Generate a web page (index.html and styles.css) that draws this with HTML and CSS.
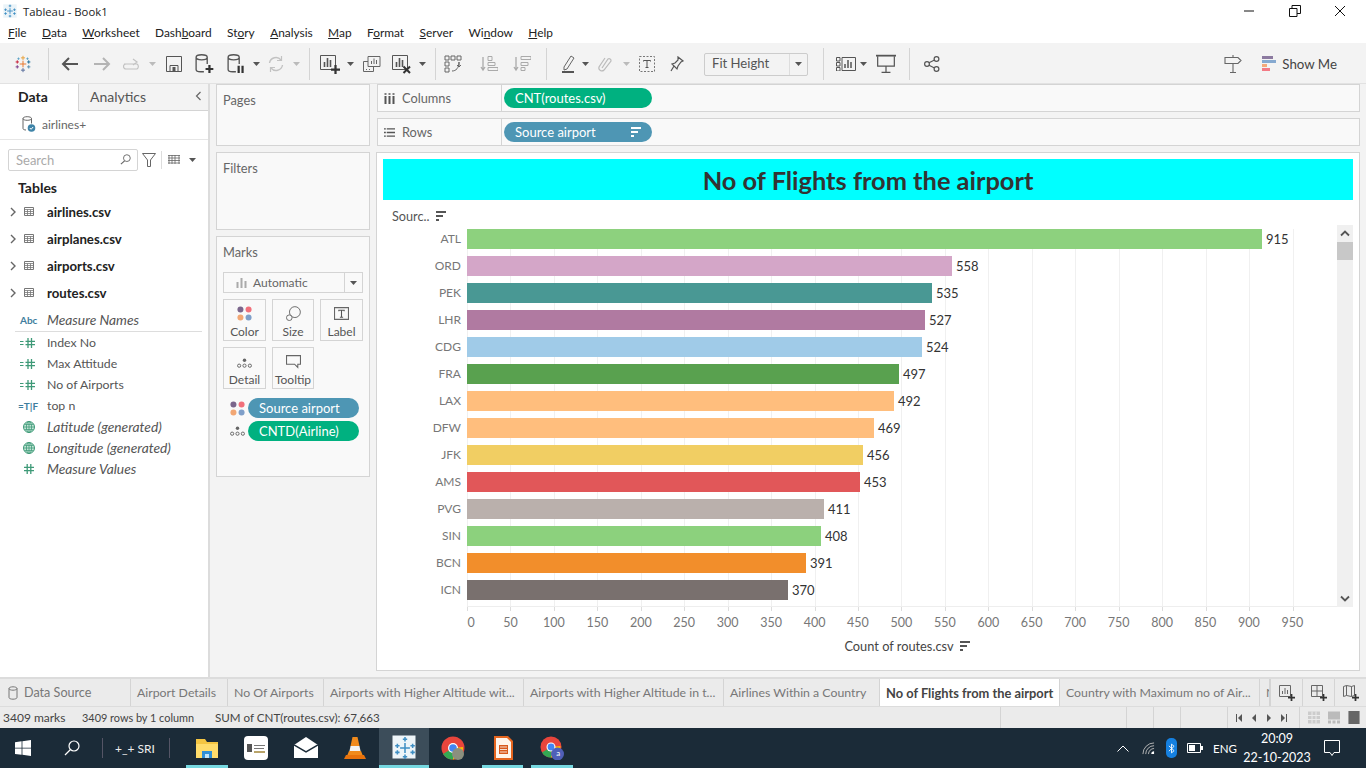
FILE: index.html
```html
<!DOCTYPE html>
<html lang="en">
<head>
<meta charset="utf-8">
<title>Tableau - Book1</title>
<link rel="stylesheet" href="styles.css">
</head>
<body>
<svg class="sprite" xmlns="http://www.w3.org/2000/svg">
  <symbol id="sort" viewBox="0 0 12 10"><path d="M1 1h10M1 5h7M1 9h3" stroke-width="2" stroke="currentColor" fill="none"/></symbol>
  <symbol id="caret" viewBox="0 0 7 4"><path d="M0 0h7L3.500 4z" fill="currentColor"/></symbol>
  <symbol id="chev" viewBox="0 0 6 10"><path d="M1 1l4 4-4 4" fill="none" stroke="#666" stroke-width="1.400"/></symbol>
  <symbol id="table" viewBox="0 0 10 9"><path d="M.5 .5h9v8h-9z" fill="none" stroke="#777"/><path d="M.5 2.500h9M.5 4.500h9M.5 6.500h9M3.500 2.500v6M6.500 2.500v6" stroke="#777" stroke-width=".8"/></symbol>
  <symbol id="measure" viewBox="0 0 15 10"><path d="M0 3.500h3.500M0 6.500h3.500" stroke="#3f9a78" stroke-width="1.200"/><path d="M8 0v10M11.500 0v10M5.500 3.300h9.500M5.500 6.700h9.500" stroke="#3f9a78" stroke-width="1.300"/></symbol>
  <symbol id="hash" viewBox="0 0 10 10"><path d="M3.200 0v10M6.800 0v10M0 3.300h10M0 6.700h10" stroke="#3f9a78" stroke-width="1.300"/></symbol>
  <symbol id="globe" viewBox="0 0 12 12"><circle cx="6" cy="6" r="5.500" fill="#c5e6d8" stroke="#3f9a78"/><path d="M.5 6h11M1.400 3.400h9.200M1.400 8.600h9.200M6 .5v11" stroke="#3f9a78" stroke-width=".8"/><ellipse cx="6" cy="6" rx="2.600" ry="5.500" fill="none" stroke="#3f9a78" stroke-width=".8"/></symbol>
  <symbol id="dots4" viewBox="0 0 14 14"><circle cx="3.200" cy="3.200" r="2.800" fill="#7b668c"/><circle cx="10.800" cy="3.200" r="2.800" fill="#f1707b"/><circle cx="3.200" cy="10.800" r="2.800" fill="#f2a774"/><circle cx="10.800" cy="10.800" r="2.800" fill="#7f9fc9"/></symbol>
  <symbol id="detail" viewBox="0 0 14 9"><circle cx="7" cy="2" r="1.600" fill="#666"/><g fill="none" stroke="#666" stroke-width=".9"><circle cx="2" cy="7" r="1.500"/><circle cx="7" cy="7" r="1.500"/><circle cx="12" cy="7" r="1.500"/></g></symbol>
  <symbol id="cyl" viewBox="0 0 14 18"><path d="M1 3v11c0 1.400 2 2 4 2h3M11 3v6M1 3c0-1.400 2.200-2.300 5-2.300S11 1.600 11 3 8.800 5.300 6 5.300 1 4.400 1 3z" fill="none" stroke="#555" stroke-width="1.200"/></symbol>
  <symbol id="tlogo" viewBox="0 0 22 22"><g fill="none" stroke-width="1.200"><path d="M11 7v8M7 11h8" stroke="#e8762d"/><path d="M11 1v5M8.500 3.500h5" stroke="#e8a23d"/><path d="M11 16v5M8.500 18.500h5" stroke="#5b6f9d"/><path d="M4 6.500v4M2 8.500h4" stroke="#c72037"/><path d="M18 6.500v4M16 8.500h4" stroke="#1f6f9a"/><path d="M4 12.500v4M2 14.500h4" stroke="#7b3f8c"/><path d="M18 12.500v4M16 14.500h4" stroke="#5b8fb0"/><path d="M5.500 3v3M4 4.500h3M16.500 3v3M15 4.500h3" stroke="#4e9ac2" stroke-width=".9"/></g></symbol>
  <symbol id="tblue" viewBox="0 0 22 22"><g fill="none" stroke="#3f8fc4" stroke-width="1.400"><path d="M11 6.500v9M6.500 11h9M11 1v4M9 3h4M11 17v4M9 19h4M4 7v4M2 9h4M18 7v4M16 9h4M4 13v4M2 15h4M18 13v4M16 15h4"/></g></symbol>
  <symbol id="plus" viewBox="0 0 8 8"><path d="M4 0v8M0 4h8" stroke="#333" stroke-width="2"/></symbol>
</svg>

<header class="titlebar">
  <svg class="ic14" viewBox="0 0 22 22"><rect x=".5" y=".5" width="21" height="21" fill="#eaf3f8"/><use href="#tblue"/></svg>
  <span class="apptitle">Tableau - Book1</span>
  <div class="winbtns">
    <svg class="ic12" viewBox="0 0 12 12"><path d="M1 6h10" stroke="#111"/></svg>
    <svg class="ic12" viewBox="0 0 12 12"><path d="M.5 3.500h7.500v8H.5zM3 3.500V.5h8.500v8H8" fill="none" stroke="#111"/></svg>
    <svg class="ic12" viewBox="0 0 12 12"><path d="M1 1l10 10M11 1L1 11" stroke="#111"/></svg>
  </div>
</header>

<nav class="menubar">
  <span><u>F</u>ile</span><span><u>D</u>ata</span><span><u>W</u>orksheet</span><span>Dash<u>b</u>oard</span><span>St<u>o</u>ry</span><span><u>A</u>nalysis</span><span><u>M</u>ap</span><span>F<u>o</u>rmat</span><span><u>S</u>erver</span><span>Wi<u>n</u>dow</span><span><u>H</u>elp</span>
</nav>

<div class="toolbar">
  <div class="tb w30"><svg class="ic18" viewBox="0 0 22 22"><use href="#tlogo"/></svg></div>
  <div class="tb w20"><i class="sep"></i></div>
  <div class="tb w24"><svg class="ic18" viewBox="0 0 18 14"><path d="M17 7H2M8 1L2 7l6 6" fill="none" stroke="#555" stroke-width="2"/></svg></div>
  <div class="tb w40"><svg class="ic18" viewBox="0 0 18 14"><path d="M1 7h15M10 1l6 6-6 6" fill="none" stroke="#b4b4b4" stroke-width="2"/></svg></div>
  <div class="tb w20"><svg class="ic18" viewBox="0 0 18 12"><path d="M1 6h13a3 3 0 010 5H3a2 2 0 010-5M10 1l4 3-4 3" fill="none" stroke="#c2c2c2" stroke-width="1.200"/></svg></div>
  <div class="tb w20"><svg class="car lt"><use href="#caret"/></svg></div>
  <div class="tb w24"><svg class="ic16" viewBox="0 0 16 16"><path d="M.5 .5h15v15H.5z" fill="none" stroke="#555"/><path d="M4 15V9.500h8V15" fill="none" stroke="#555"/><path d="M6.500 11h3v4h-3z" fill="#555"/></svg></div>
  <div class="tb w38"><svg class="ic20" viewBox="0 0 18 18"><use href="#cyl" width="14" height="18"/><path d="M13 10v7M9.500 13.500h7" stroke="#333" stroke-width="2"/></svg></div>
  <div class="tb w26"><svg class="ic20" viewBox="0 0 18 18"><use href="#cyl" width="14" height="18"/><path d="M10.500 10.500v6.500M14 10.500v6.500" stroke="#333" stroke-width="2"/></svg></div>
  <div class="tb w12"><svg class="car"><use href="#caret"/></svg></div>
  <div class="tb w28"><svg class="ic18" viewBox="0 0 18 18"><path d="M2.500 8a6.500 6.500 0 0111.500-3M15.500 10a6.500 6.500 0 01-11.500 3" fill="none" stroke="#c2c2c2" stroke-width="1.400"/><path d="M14.500 1v4.500H10M3.500 17v-4.500H8" fill="none" stroke="#c2c2c2" stroke-width="1.200"/></svg></div>
  <div class="tb w12"><svg class="car lt"><use href="#caret"/></svg></div>
  <div class="tb w14"><i class="sep"></i></div>
  <div class="tb w28"><svg class="ic20" viewBox="0 0 20 20"><path d="M.5 1.500h15v14H.5z" fill="none" stroke="#555"/><path d="M4.500 13V8M7.500 13V4M10.500 13V6" stroke="#555" stroke-width="1.600"/><use href="#plus" x="11" y="11" width="9" height="9"/></svg></div>
  <div class="tb w12"><svg class="car"><use href="#caret"/></svg></div>
  <div class="tb w32"><svg class="ic18" viewBox="0 0 18 18"><path d="M5 1.500h12v10H5zM.5 6.500H5M.5 6.500v10h10V12" fill="none" stroke="#666"/><path d="M8.500 9V6M11 9V3.500M13.500 9V5M3 14.500h1M6 14.500h1" stroke="#666"/></svg></div>
  <div class="tb w28"><svg class="ic20" viewBox="0 0 20 20"><path d="M.5 1.500h15v14H.5z" fill="none" stroke="#555"/><path d="M4.500 13V8M7.500 13V4M10.500 13V6" stroke="#555" stroke-width="1.600"/><path d="M11.500 12.500l6.500 6.500M18 12.500L11.500 19" stroke="#333" stroke-width="2"/></svg></div>
  <div class="tb w12"><svg class="car"><use href="#caret"/></svg></div>
  <div class="tb w14"><i class="sep"></i></div>
  <div class="tb w22"><svg class="ic18" viewBox="0 0 18 18"><path d="M1 1h4v4H1zM1 7h4v4H1zM1 13h4v4H1zM7 1h4v4H7zM13 1h4v4h-4z" fill="none" stroke="#666"/><path d="M15 7c0 6-3 9-7 9M15 12l-2-2M15 7v5l2-2" fill="none" stroke="#666"/></svg></div>
  <div class="tb w50"><svg class="ic18" viewBox="0 0 18 18"><path d="M3 2v13M1 12l2 3 2-3" fill="none" stroke="#aaa" stroke-width="1.300"/><path d="M8 1.500h4v4H8zM8 7.500h7v3H8zM8 12.500h10v3H8z" fill="none" stroke="#aaa"/></svg></div>
  <div class="tb w16"><svg class="ic18" viewBox="0 0 18 18"><path d="M3 2v13M1 12l2 3 2-3" fill="none" stroke="#aaa" stroke-width="1.300"/><path d="M8 1.500h10v3H8zM8 7.500h7v3H8zM8 12.500h4v3H8z" fill="none" stroke="#aaa"/></svg></div>
  <div class="tb w32"><i class="sep"></i></div>
  <div class="tb w12"><svg class="ic18" viewBox="0 0 14 18"><path d="M3 12L10 1l3 2-7 11-3 1z" fill="none" stroke="#666"/><path d="M1 17h12" stroke="#555" stroke-width="2"/></svg></div>
  <div class="tb w22"><svg class="car"><use href="#caret"/></svg></div>
  <div class="tb w18"><svg class="ic18" viewBox="0 0 14 18"><path d="M4 13l6-9a2 2 0 013 2L6 15a3 3 0 01-5-3l6-9" fill="none" stroke="#bbb" stroke-width="1.200"/></svg></div>
  <div class="tb w24"><svg class="car lt"><use href="#caret"/></svg></div>
  <div class="tb w18"><svg class="ic16" viewBox="0 0 16 16"><path d="M.5 .5h15v15H.5z" fill="none" stroke="#777" stroke-dasharray="2 1.500"/><path d="M4.500 5.500v-1h7v1M8 4.500v7M6.500 11.500h3" fill="none" stroke="#555"/></svg></div>
  <div class="tb w42"><svg class="ic16" viewBox="0 0 14 16"><path d="M8 1l5 4-2 1-3 4-1 3-5-5 3-1 3-3zM4 10l-3 5" fill="none" stroke="#555" stroke-width="1.200"/></svg></div>
  <div class="fitbox"><span class="fittext">Fit Height</span><span class="fitcar"><svg class="car"><use href="#caret"/></svg></span></div>
  <div class="tb w30"><i class="sep"></i></div>
  <div class="tb w16"><svg class="ic20w" viewBox="0 0 20 14"><path d="M.5 .5h3.500v3.500H.5zM.5 5.500h3.500V9H.5zM.5 10.500h3.500V14H.5zM6 .5h13.500v13H6z" fill="none" stroke="#555"/><path d="M9 11V7M12 11V3M15 11V5" stroke="#555" stroke-width="1.500"/></svg></div>
  <div class="tb w18"><svg class="car"><use href="#caret"/></svg></div>
  <div class="tb w28"><svg class="ic20" viewBox="0 0 18 18"><path d="M0 1.500h18" stroke="#555" stroke-width="1.600"/><path d="M1.500 2v9h15V2M9 11v5M5 16.500h8" fill="none" stroke="#555" stroke-width="1.100"/></svg></div>
  <div class="tb w18"><i class="sep"></i></div>
  <div class="tb w28"><svg class="ic16" viewBox="0 0 16 16"><g fill="none" stroke="#555" stroke-width="1.200"><circle cx="3" cy="8" r="2.400"/><circle cx="12.500" cy="3" r="2.400"/><circle cx="12.500" cy="13" r="2.400"/><path d="M5 6.800l5.500-2.800M5 9.200l5.500 2.800"/></g></svg></div>
  <div class="tbspacer"></div>
  <svg class="ic18 signpost" viewBox="0 0 18 18"><path d="M9 0v3M1 2.500h13l3 3-3 3H1zM9 8.500V17M6 17.500h6" fill="none" stroke="#666" stroke-width="1.100"/></svg>
  <div class="showme">
    <svg class="showme-ic" viewBox="0 0 14 15"><rect width="11" height="3" fill="#8c7aa0"/><rect y="4" width="14" height="3" fill="#86a9d0"/><rect y="8" width="5" height="3" fill="#f4a97a"/><rect y="12" width="8" height="3" fill="#f37a85"/></svg>
    <span>Show Me</span>
  </div>
</div>

<main class="main">
  <aside class="sidebar">
    <div class="sidetabs">
      <div class="stab active">Data</div>
      <div class="stab second">Analytics<svg class="back" viewBox="0 0 7 10"><path d="M5.500 1l-4 4 4 4" fill="none" stroke="#666" stroke-width="1.200"/></svg></div>
    </div>
    <div class="dsrow">
      <svg class="dsicon" viewBox="0 0 14 16"><path d="M1 2.500v10c0 1 1.500 1.500 3 1.500M9.500 2.500v5M1 2.500C1 1.400 2.800 .7 5.200 .7S9.500 1.400 9.500 2.500 7.700 4.300 5.200 4.300 1 3.600 1 2.500z" fill="none" stroke="#666"/><circle cx="9.500" cy="12" r="3.800" fill="#3f84a8"/><path d="M7.800 12l1.300 1.300 2-2.300" fill="none" stroke="#fff"/></svg>
      <span>airlines+</span>
    </div>
    <div class="searchrow">
      <div class="search"><span>Search</span><svg class="ic11" viewBox="0 0 12 12"><circle cx="7.500" cy="4.500" r="3.700" fill="none" stroke="#666"/><path d="M5 7.500L1 11" stroke="#666" stroke-width="1.300"/></svg></div>
      <svg class="filter" viewBox="0 0 14 14"><path d="M.5 .5h13L8.500 7v6.500h-3V7z" fill="none" stroke="#666"/></svg>
      <i class="vsep"></i>
      <svg class="viewgrid" viewBox="0 0 12 9"><path d="M0 .5h12M0 3h12M0 5.500h12M0 8h12M1 0v9M4 0v9M7 0v9M11 0v9" stroke="#666" stroke-width=".8"/></svg>
      <svg class="car"><use href="#caret"/></svg>
    </div>
    <h2 class="tablesh">Tables</h2>
    <ul class="tables">
      <li><svg class="chev"><use href="#chev"/></svg><svg class="tableic"><use href="#table"/></svg><b>airlines.csv</b></li>
      <li><svg class="chev"><use href="#chev"/></svg><svg class="tableic"><use href="#table"/></svg><b>airplanes.csv</b></li>
      <li><svg class="chev"><use href="#chev"/></svg><svg class="tableic"><use href="#table"/></svg><b>airports.csv</b></li>
      <li><svg class="chev"><use href="#chev"/></svg><svg class="tableic"><use href="#table"/></svg><b>routes.csv</b></li>
    </ul>
    <div class="mnames"><span class="abc">Abc</span><em>Measure Names</em></div>
    <ul class="fields">
      <li><span class="fi"><svg class="mic"><use href="#measure"/></svg></span><span>Index No</span></li>
      <li><span class="fi"><svg class="mic"><use href="#measure"/></svg></span><span>Max Attitude</span></li>
      <li><span class="fi"><svg class="mic"><use href="#measure"/></svg></span><span>No of Airports</span></li>
      <li><span class="fi tf">=T|F</span><span>top n</span></li>
      <li><span class="fi"><svg class="gic"><use href="#globe"/></svg></span><em>Latitude (generated)</em></li>
      <li><span class="fi"><svg class="gic"><use href="#globe"/></svg></span><em>Longitude (generated)</em></li>
      <li><span class="fi"><svg class="hic"><use href="#hash"/></svg></span><em>Measure Values</em></li>
    </ul>
  </aside>

  <section class="cards">
    <div class="card pages"><h3>Pages</h3></div>
    <div class="card filters"><h3>Filters</h3></div>
    <div class="card marks">
      <h3>Marks</h3>
      <div class="markdrop">
        <span class="md-l"><svg class="ic11" viewBox="0 0 11 11"><path d="M1.500 11V5M5.500 11V1M9.500 11V4" stroke="#aaa" stroke-width="2"/></svg>Automatic</span>
        <span class="md-r"><svg class="car"><use href="#caret"/></svg></span>
      </div>
      <div class="markgrid">
        <div class="mbtn"><svg class="mbi14"><use href="#dots4"/></svg><span>Color</span></div>
        <div class="mbtn"><svg class="mbi" viewBox="0 0 16 16"><circle cx="9.500" cy="6.500" r="5.800" fill="none" stroke="#666"/><circle cx="3.500" cy="12.500" r="3" fill="#f9f9f9" stroke="#666"/></svg><span>Size</span></div>
        <div class="mbtn"><svg class="mbi" viewBox="0 0 14 14"><path d="M.5 1.500h13v11H.5z" fill="none" stroke="#666"/><path d="M4.500 5V4h5v1M7 4v6.500M5.500 10.500h3" fill="none" stroke="#555"/></svg><span>Label</span></div>
        <div class="mbtn"><svg class="mbi14 dt"><use href="#detail"/></svg><span>Detail</span></div>
        <div class="mbtn"><svg class="mbi" viewBox="0 0 14 14"><path d="M.5 1.500h13v8h-2.500v3l-3-3H.5z" fill="none" stroke="#666"/></svg><span>Tooltip</span></div>
      </div>
      <div class="mpill"><svg class="mbi14"><use href="#dots4"/></svg><span class="pill blue">Source airport</span></div>
      <div class="mpill"><svg class="mbi14 dt"><use href="#detail"/></svg><span class="pill green">CNTD(Airline)</span></div>
    </div>
  </section>

  <section class="work">
    <div class="shelf">
      <div class="shelf-l"><svg class="shic" viewBox="0 0 11 11"><path d="M1.500 3v8M5.500 3v8M9.500 3v8" stroke="#555" stroke-width="2"/><path d="M.5 1h2M4.500 1h2M8.500 1h2" stroke="#555" stroke-width="1.500"/></svg>Columns</div>
      <span class="pill green shelf-p">CNT(routes.csv)</span>
    </div>
    <div class="shelf">
      <div class="shelf-l"><svg class="shic" viewBox="0 0 12 10"><path d="M3 1h9M3 5h9M3 9h9M0 1h2M0 5h2M0 9h2" stroke="#555" stroke-width="1.500"/></svg>Rows</div>
      <span class="pill blue shelf-p">Source airport<svg class="sorti"><use href="#sort"/></svg></span>
    </div>
    <div class="viz">
      <h1 class="viztitle">No of Flights from the airport</h1>
      <div class="rowhead">Sourc..<svg class="sorti dark"><use href="#sort"/></svg></div>
      <div class="chart">
        <div class="plot">
          <div class="row"><span class="lab">ATL</span><i class="bar c1"></i><span class="val">915</span></div>
          <div class="row"><span class="lab">ORD</span><i class="bar c2"></i><span class="val">558</span></div>
          <div class="row"><span class="lab">PEK</span><i class="bar c3"></i><span class="val">535</span></div>
          <div class="row"><span class="lab">LHR</span><i class="bar c4"></i><span class="val">527</span></div>
          <div class="row"><span class="lab">CDG</span><i class="bar c5"></i><span class="val">524</span></div>
          <div class="row"><span class="lab">FRA</span><i class="bar c6"></i><span class="val">497</span></div>
          <div class="row"><span class="lab">LAX</span><i class="bar c7"></i><span class="val">492</span></div>
          <div class="row"><span class="lab">DFW</span><i class="bar c8"></i><span class="val">469</span></div>
          <div class="row"><span class="lab">JFK</span><i class="bar c9"></i><span class="val">456</span></div>
          <div class="row"><span class="lab">AMS</span><i class="bar c10"></i><span class="val">453</span></div>
          <div class="row"><span class="lab">PVG</span><i class="bar c11"></i><span class="val">411</span></div>
          <div class="row"><span class="lab">SIN</span><i class="bar c12"></i><span class="val">408</span></div>
          <div class="row"><span class="lab">BCN</span><i class="bar c13"></i><span class="val">391</span></div>
          <div class="row"><span class="lab">ICN</span><i class="bar c14"></i><span class="val">370</span></div>
        </div>
        <div class="vscroll">
          <svg class="sc-ar" viewBox="0 0 10 6"><path d="M1 5l4-4 4 4" fill="none" stroke="#555" stroke-width="1.800"/></svg>
          <div class="sc-thumb"></div>
          <div class="sc-fill"></div>
          <svg class="sc-ar" viewBox="0 0 10 6"><path d="M1 1l4 4 4-4" fill="none" stroke="#555" stroke-width="1.800"/></svg>
        </div>
      </div>
      <div class="ticks"></div>
      <div class="axis">
        <span class="zero">0</span><span>50</span><span>100</span><span>150</span><span>200</span><span>250</span><span>300</span><span>350</span><span>400</span><span>450</span><span>500</span><span>550</span><span>600</span><span>650</span><span>700</span><span>750</span><span>800</span><span>850</span><span>900</span><span>950</span>
      </div>
      <div class="axistitle">Count of routes.csv<svg class="sorti dark"><use href="#sort"/></svg></div>
    </div>
  </section>
</main>

<div class="tabs">
  <div class="tab t-ds"><svg class="tcyl" viewBox="0 0 10 14"><path d="M1 2.500v9c0 1 1.800 1.700 4 1.700s4-.7 4-1.700v-9M1 2.500C1 1.500 2.800 .8 5 .8s4 .7 4 1.700S7.200 4.200 5 4.200 1 3.500 1 2.500z" fill="none" stroke="#777"/></svg>Data Source</div>
  <div class="tab t-98">Airport Details</div>
  <div class="tab t-96">No Of Airports</div>
  <div class="tab t-200">Airports with Higher Altitude wit...</div>
  <div class="tab t-200">Airports with Higher Altitude in t...</div>
  <div class="tab t-156">Airlines Within a Country</div>
  <div class="tab active t-180">No of Flights from the airport</div>
  <div class="tab t-200">Country with Maximum no of Air...</div>
  <div class="tab t-9">N</div>
  <div class="tabbtns">
    <span class="tbtn"><svg class="ic16" viewBox="0 0 16 16"><path d="M.5 .5h11v11H.5z" fill="none" stroke="#666"/><path d="M3.500 9V6M6 9V3M8.500 9V5" stroke="#666"/><use href="#plus" x="9" y="9" width="7" height="7"/></svg></span>
    <span class="tbtn"><svg class="ic16" viewBox="0 0 16 16"><path d="M.5 .5h11v11H.5zM6 .5v11M.5 6h11" fill="none" stroke="#666"/><use href="#plus" x="9" y="9" width="7" height="7"/></svg></span>
    <span class="tbtn"><svg class="ic16" viewBox="0 0 16 16"><path d="M.5 1.500l3-1 5 1 3-1v10l-3 1-5-1-3 1zM3.500 .5v10M8.500 1.500v10" fill="none" stroke="#666"/><use href="#plus" x="9" y="9" width="7" height="7"/></svg></span>
  </div>
</div>

<div class="status">
  <span class="st-a">3409 marks</span><span class="st-b">3409 rows by 1 column</span><span class="st-c">SUM of CNT(routes.csv): 67,663</span>
  <div class="st-cells"><i class="w126"></i><i class="w27"></i><i class="w27"></i><i class="w47"></i></div>
  <div class="st-nav">
    <svg viewBox="0 0 6 8"><path d="M0 0h1v8H0zM6 0v8L2 4z" fill="#555"/></svg>
    <svg viewBox="0 0 6 8"><path d="M5 0v8L1 4z" fill="#555"/></svg>
    <svg viewBox="0 0 6 8"><path d="M1 0v8l4-4z" fill="#555"/></svg>
    <svg viewBox="0 0 6 8"><path d="M5 0h1v8H5zM0 0v8l4-4z" fill="#555"/></svg>
  </div>
  <div class="st-view">
    <svg viewBox="0 0 12 12"><path d="M0 0h12v12H0z" fill="#ccc"/><path d="M4 0v12M8 0v12M0 4h12M0 8h12" stroke="#ebebeb"/></svg>
    <svg viewBox="0 0 12 12"><path d="M0 0h12v8H0zM0 9h3v3H0zM4.500 9h3v3h-3zM9 9h3v3H9z" fill="#bbb"/></svg>
    <svg viewBox="0 0 12 14"><path d="M0 0h12v14H0z" fill="#666"/></svg>
  </div>
</div>

<footer class="taskbar">
  <svg class="tk-win" viewBox="0 0 16 16"><path d="M0 2.200l6.600-.9v6.400H0zM7.400 1.200L16 0v7.700H7.400zM0 8.400h6.600v6.400L0 13.900zM7.400 8.400H16V16l-8.600-1.200z" fill="#fff"/></svg>
  <svg class="tk-search" viewBox="0 0 16 16"><circle cx="10" cy="6" r="5" fill="none" stroke="#fff" stroke-width="1.200"/><path d="M6.500 9.500L1 15" stroke="#fff" stroke-width="1.300"/></svg>
  <i class="tk-sep s1"></i><span class="tk-name">+_+ SRI</span><i class="tk-sep s2"></i>
  <div class="tk-apps">
    <div class="app on"><svg viewBox="0 0 24 24"><path d="M1 3h9l2 3h11v16H1z" fill="#f4c542"/><path d="M1 8h22v14H1z" fill="#ffdc6b"/><path d="M7 15h10v7H7z" fill="#2f8fd6"/><path d="M10 18h4v4h-4z" fill="#bfe3f7"/></svg></div>
    <div class="app"><svg viewBox="0 0 24 24"><rect width="24" height="24" rx="4" fill="#fff"/><path d="M3 8h5v8H3z" fill="#555"/><path d="M10 9h11v1H10zM10 12h10v1H10z" fill="#777"/><path d="M10 15h11v2H10z" fill="#b9a46a"/></svg></div>
    <div class="app"><svg viewBox="0 0 24 24"><path d="M0 9l12-8 12 8v13H0z" fill="#fff"/><path d="M0 9l12 7 12-7" fill="none" stroke="#1b2b38" stroke-width="1.500"/></svg></div>
    <div class="app"><svg viewBox="0 0 24 24"><path d="M9.500 1h5l2 9h-9zM6 15h12l2 5H4z" fill="#f08a1c"/><path d="M7.500 10h9l1 5h-11z" fill="#f2f2f2"/><path d="M3 19h18l2 4H1z" fill="#e8720c"/></svg></div>
    <div class="app cur"><svg viewBox="0 0 24 24"><rect x=".5" y=".5" width="23" height="23" fill="#eef5f9"/><g transform="translate(1 1)"><use href="#tblue"/></g></svg></div>
    <div class="app"><svg viewBox="0 0 24 24"><circle cx="12" cy="12" r="11.500" fill="#e8453c"/><path d="M12 12L2 18a11.500 11.500 0 0010 5.500z" fill="#34a853"/><path d="M12 12l10-1a11.500 11.500 0 01-10 12.500z" fill="#fbbc05"/><circle cx="12" cy="12" r="5" fill="#fff"/><circle cx="12" cy="12" r="3.800" fill="#4285f4"/><circle cx="17" cy="18" r="6" fill="#8b8f7e"/></svg></div>
    <div class="app on"><svg viewBox="0 0 24 24"><path d="M3 0h14l5 5v19H3z" fill="#e5651f"/><path d="M5 2h11l4 4v16H5z" fill="#fff4ea"/><path d="M8 9h9v9H8z" fill="#d9581a"/><path d="M9 11h7M9 13.500h7M9 16h7" stroke="#fff" stroke-width=".8"/></svg></div>
    <div class="app on"><svg viewBox="0 0 24 24"><circle cx="11" cy="11" r="10.500" fill="#e8453c"/><path d="M11 11L2 16.500A10.500 10.500 0 0011 21.500z" fill="#34a853"/><path d="M11 11l9.500-1A10.500 10.500 0 0111 21.500z" fill="#fbbc05"/><circle cx="11" cy="11" r="4.500" fill="#fff"/><circle cx="11" cy="11" r="3.400" fill="#4285f4"/><circle cx="17.500" cy="18" r="6.500" fill="#4f5fb8"/></svg><b class="a-badge">a</b></div>
  </div>
  <div class="tray">
    <svg class="t-car" viewBox="0 0 12 7"><path d="M.5 6.500L6 1l5.500 5.500" fill="none" stroke="#fff"/></svg>
    <svg class="t-wifi" viewBox="0 0 14 14"><path d="M1 13a12 12 0 0112-12M4 13a9 9 0 019-9M7 13a6 6 0 016-6" fill="none" stroke="#bbb"/><path d="M10 13a3 3 0 013-3v3z" fill="#fff"/></svg>
    <span class="t-bt"><svg viewBox="0 0 8 12"><path d="M1 3l6 5.500-3 2.500V1l3 2.500L1 9" fill="none" stroke="#fff"/></svg></span>
    <svg class="t-bat" viewBox="0 0 16 10"><path d="M.5 .5h13v9H.5z" fill="none" stroke="#fff"/><path d="M2 2h6v6H2zM14 3h2v4h-2z" fill="#fff"/></svg>
    <span class="t-eng">ENG</span>
    <div class="t-clock"><span>20:09</span><span>22-10-2023</span></div>
    <svg class="t-note" viewBox="0 0 16 16"><path d="M.5 .5h15v12H10l-2 3-2-3H.5z" fill="none" stroke="#fff"/></svg>
  </div>
</footer>
</body>
</html>
```
FILE: styles.css
```css
* { box-sizing: border-box; }
html, body { margin: 0; padding: 0; }
body {
  width: 1366px; height: 768px; overflow: hidden;
  display: flex; flex-direction: column;
  font-family: "Lato", "Open Sans", sans-serif;
  font-size: 13px; color: #555; background: #f3f3f3;
}
svg { display: block; flex: none; }
h1, h2, h3, ul { margin: 0; padding: 0; font-weight: normal; }
ul { list-style: none; }
em { font-style: italic; font-size: 13.8px; }
.sprite { display: none; }
.ic11 { width: 11px; height: 11px; }
.ic12 { width: 12px; height: 12px; }
.ic14 { width: 14px; height: 14px; }
.ic16 { width: 16px; height: 16px; }
.ic18 { width: 18px; height: 18px; }
.ic20 { width: 20px; height: 20px; }
.ic20w { width: 20px; height: 14px; }
.car { width: 7px; height: 4px; color: #555; }
.car.lt { color: #bbb; }

/* title + menu */
.titlebar { height: 21px; background: #fff; display: flex; align-items: center; padding: 1px 0 0 3px; color: #222; }
.apptitle { margin-left: 6px; font-family: "Open Sans", sans-serif; font-size: 11.3px; }
.winbtns { margin-left: auto; display: flex; gap: 33.5px; padding-right: 20px; }
.menubar { height: 22px; background: #fff; display: flex; align-items: center; padding-left: 8px; gap: 15.4px; color: #222; font-size: 11.9px; }

/* toolbar */
.toolbar { height: 40px; background: #f3f3f3; display: flex; align-items: center; padding: 2px 0 0 8px; }
.tb { display: flex; align-items: center; justify-content: center; height: 100%; flex: none; }
.sep { display: block; width: 1px; height: 32px; background: #d4d4d4; }
.w12 { width: 12px; } .w14 { width: 14px; } .w16 { width: 16px; } .w18 { width: 18px; }
.w20 { width: 20px; } .w22 { width: 22px; } .w24 { width: 24px; } .w26 { width: 26px; }
.w28 { width: 28px; } .w30 { width: 30px; } .w32 { width: 32px; } .w38 { width: 38px; }
.w40 { width: 40px; } .w42 { width: 42px; } .w50 { width: 50px; }
.fitbox { width: 104px; height: 23px; margin-left: 6px; display: flex; border: 1px solid #ccc; border-radius: 2px; background: #f3f3f3; flex: none; }
.fittext { flex: 1; padding-left: 7px; line-height: 19px; font-size: 13.1px; color: #555; }
.fitcar { width: 18px; border-left: 1px solid #ddd; display: flex; align-items: center; justify-content: center; }
.tbspacer { flex: 1; }
.signpost { margin-right: 20px; }
.showme { display: flex; align-items: center; gap: 6px; padding: 0 29px 1px 0; font-size: 13.3px; color: #444; }
.showme-ic { width: 14px; height: 15px; }

/* main */
.main { height: 594px; display: flex; background: #f3f3f3; border-top: 1px solid #e2e2e2; }
.sidebar { width: 210px; background: #fff; border-right: 2px solid #dcdcdc; flex: none; }
.sidetabs { display: flex; height: 27px; }
.stab { display: flex; align-items: center; font-size: 14px; padding-bottom: 2px; }
.stab.active { width: 78px; padding-left: 18px; font-weight: 700; color: #222; }
.stab.second { flex: 1; padding-left: 11px; background: #f3f3f3; border-left: 1px solid #d4d4d4; border-bottom: 1px solid #d4d4d4; color: #555; }
.back { width: 7px; height: 10px; margin-left: auto; margin-right: 6px; }
.dsrow { height: 29px; padding: 0 0 2px 22px; display: flex; align-items: center; gap: 6px; border-bottom: 1px solid #e6e6e6; font-size: 12px; color: #666; }
.dsicon { width: 14px; height: 16px; }
.searchrow { display: flex; align-items: center; padding: 8px 0 1px 8px; height: 32px; }
.search { width: 130px; height: 22px; border: 1px solid #d4d4d4; border-radius: 2px; display: flex; align-items: center; justify-content: space-between; padding: 0 6px 0 7px; font-size: 13px; color: #aaa; }
.filter { width: 14px; height: 14px; margin-left: 4px; }
.vsep { width: 1px; height: 18px; background: #ddd; margin: 0 6px 0 5px; }
.viewgrid { width: 12px; height: 9px; margin-right: 9px; }
.tablesh { margin: 7px 0 0 18px; font-size: 14px; font-weight: 700; color: #222; line-height: 18px; }
.tables { margin-top: 1px; }
.tables li { height: 27px; display: flex; align-items: center; padding-left: 10px; color: #222; font-size: 13.2px; }
.tables b { font-weight: 700; }
.chev { width: 6px; height: 10px; }
.tableic { width: 10px; height: 9px; margin: 0 13px 0 8px; }
.mnames { height: 26px; margin: 0 6px 0 15px; padding-top: 2px; display: flex; align-items: center; border-bottom: 1px solid #ddd; }
.abc { width: 32px; padding-left: 5px; font-size: 10px; font-weight: 700; color: #3f7e9e; }
.fields { font-size: 12.3px; }
.fields li { height: 21px; display: flex; align-items: center; }
.fi { width: 47px; padding-left: 20px; display: flex; }
.tf { padding-left: 18px; font-size: 10px; font-weight: 700; color: #3f7e9e; white-space: nowrap; }
.mic { width: 15px; height: 10px; }
.hic { width: 10px; height: 10px; margin-left: 4px; }
.gic { width: 12px; height: 12px; margin-left: 3px; }

/* cards */
.cards { width: 166px; padding: 0 6px; display: flex; flex-direction: column; gap: 6px; flex: none; }
.card { background: #f9f9f9; border: 1px solid #d4d4d4; padding: 7px 6px; }
.card h3 { font-size: 12.8px; line-height: 17px; color: #666; }
.pages { height: 62px; }
.filters { height: 78px; }
.marks { height: 241px; }
.markdrop { margin-top: 11px; height: 21px; border: 1px solid #d4d4d4; display: flex; font-size: 12px; color: #666; width: 140px; }
.md-l { flex: 1; display: flex; align-items: center; gap: 6px; padding-left: 12px; }
.md-r { width: 18px; border-left: 1px solid #d4d4d4; display: flex; align-items: center; justify-content: center; }
.markgrid { margin-top: 6px; display: grid; grid-template-columns: 43px 42px 43px; grid-auto-rows: 42px; column-gap: 6px; row-gap: 6px; width: 140px; }
.mbtn { border: 1px solid #d4d4d4; display: flex; flex-direction: column; align-items: center; font-size: 12px; color: #555; padding-top: 6px; }
.mbtn span { margin-top: auto; line-height: 16px; }
.mbi { width: 15px; height: 15px; }
.mbi14 { width: 15px; height: 15px; }
.mbi14.dt { height: 10px; }
.mbtn .mbi14.dt { margin-top: 4px; }
.mpill { display: flex; align-items: center; gap: 3px; width: 140px; margin-top: 3px; height: 20px; padding-left: 7px; }
.markgrid + .mpill { margin-top: 9px; }
.mpill .pill { width: 111px; }
.pill { display: flex; align-items: center; height: 20px; border-radius: 10px; color: #fff; padding-left: 11px; font-size: 13px; }
.blue { background: #4e96b4; }
.green { background: #00b180; }

/* shelves */
.work { flex: 1; padding: 0 6px 6px 0; display: flex; flex-direction: column; gap: 6px; min-width: 0; }
.shelf { height: 28px; background: #f9f9f9; border: 1px solid #d4d4d4; display: flex; align-items: center; flex: none; margin-left: 1px; }
.shelf-l { width: 124px; height: 100%; border-right: 1px solid #d4d4d4; display: flex; align-items: center; gap: 7px; padding-left: 6px; font-size: 12.8px; color: #666; }
.shic { width: 11px; height: 11px; }
.shelf-p { width: 148px; margin-left: 2px; }
.sorti { width: 12px; height: 10px; color: #fff; }
.shelf-p .sorti { margin-left: auto; margin-right: 10px; }
.sorti.dark { color: #555; margin-left: 5px; }

/* viz */
.viz { flex: 1; background: #fff; border: 1px solid #d4d4d4; padding: 6px 6px 0; min-height: 0; }
.viztitle { height: 41px; background: #00ffff; color: #333; font-size: 25.4px; font-weight: 700; text-align: center; line-height: 43px; }
.rowhead { height: 25px; padding: 6px 0 0 9px; display: flex; align-items: center; color: #555; font-size: 12.7px; }
.chart { display: flex; height: 382px; }
.plot {
  width: 955px; padding: 4px 0 0 84px; display: flex; flex-direction: column; gap: 7px;
  background-image: linear-gradient(#eee, #eee), repeating-linear-gradient(90deg, #f0f0f0 0, #f0f0f0 1px, transparent 1px, transparent 43.45px);
  background-size: 100% 1px, 828px 100%;
  background-position: left bottom, left top;
  background-repeat: no-repeat;
  background-origin: content-box; background-clip: content-box;
}
.row { height: 20px; margin-left: -84px; display: flex; align-items: center; flex: none; }
.lab { width: 84px; padding: 0 6px 2px 0; text-align: right; color: #777; font-size: 12px; flex: none; }
.bar { display: block; height: 20px; }
.val { margin-left: 4px; padding-bottom: 1px; color: #333; font-size: 13px; }
.c1 { width: 795px; background: #8dd17e; }
.c2 { width: 485px; background: #d4a6c8; }
.c3 { width: 465px; background: #499894; }
.c4 { width: 458px; background: #b07aa1; }
.c5 { width: 455px; background: #a0cbe8; }
.c6 { width: 432px; background: #59a14f; }
.c7 { width: 427px; background: #ffbe7d; }
.c8 { width: 407px; background: #ffbe7d; }
.c9 { width: 396px; background: #f1ce63; }
.c10 { width: 393px; background: #e15759; }
.c11 { width: 357px; background: #bab0ac; }
.c12 { width: 354px; background: #8cd17d; }
.c13 { width: 339px; background: #f28e2b; }
.c14 { width: 321px; background: #79706e; }
.vscroll { width: 16px; background: #f0f0f0; display: flex; flex-direction: column; align-items: center; }
.sc-ar { width: 10px; height: 17px; padding: 5px 0; }
.sc-thumb { width: 100%; height: 18px; background: #c8c8c8; }
.sc-fill { flex: 1; }
.ticks { margin-left: 84px; width: 827px; height: 4px; background-image: repeating-linear-gradient(90deg, #ddd 0, #ddd 1px, transparent 1px, transparent 43.45px); }
.axis { margin-left: 62.3px; display: flex; height: 22px; align-items: center; color: #777; font-size: 12.5px; }
.axis span { width: 43.45px; text-align: center; flex: none; }
.axis .zero { padding-left: 8px; }
.axistitle { margin-left: 84px; width: 871px; height: 26px; padding-left: 10px; display: flex; align-items: center; justify-content: center; color: #444; font-size: 12.8px; }

/* tabs */
.tabs { height: 30px; background: #ebebeb; border-top: 2px solid #dcdcdc; border-bottom: 1px solid #dcdcdc; display: flex; font-size: 12.3px; color: #777; overflow: hidden; }
.tab { padding-left: 6px; border-right: 1px solid #d4d4d4; display: flex; align-items: center; white-space: nowrap; overflow: hidden; flex: none; }
.t-ds { width: 131px; padding-left: 8px; gap: 6px; font-size: 12.6px; }
.t-98 { width: 97px; }
.t-96 { width: 96px; }
.t-200 { width: 200px; }
.t-156 { width: 156px; }
.t-180 { width: 180px; }
.t-9 { width: 10px; }
.tab.active { background: #fff; color: #444; font-weight: 700; font-size: 12.85px; }
.tcyl { width: 10px; height: 14px; }
.tabbtns { display: flex; flex: none; }
.tbtn { width: 32px; height: 100%; border-left: 1px solid #d4d4d4; display: flex; align-items: center; justify-content: center; }

/* status */
.status { height: 21px; background: #ebebeb; display: flex; align-items: center; font-size: 11.6px; color: #444; }
.st-a { margin-left: 3px; width: 79px; font-size: 12px; }
.st-b { width: 133px; font-size: 10.9px; }
.st-cells { margin-left: auto; display: flex; height: 100%; }
.st-cells i { display: block; border-left: 1px solid #d4d4d4; height: 100%; }
.w126 { width: 126px; } .w27 { width: 27px; } .w47 { width: 47px; }
.st-nav { width: 72px; display: flex; gap: 9px; align-items: center; border-left: 1px solid #d4d4d4; height: 100%; padding-left: 8px; }
.st-nav svg { width: 6px; height: 8px; }
.st-view { width: 67px; display: flex; gap: 8px; align-items: center; border-left: 1px solid #d4d4d4; height: 100%; padding-left: 8px; }
.st-view svg { width: 12px; height: 13px; }

/* taskbar */
.taskbar { height: 40px; background: #1b2b38; display: flex; align-items: center; color: #fff; padding-left: 15px; flex: none; }
.tk-win { width: 16px; height: 16px; }
.tk-search { width: 16px; height: 16px; margin-left: 33px; }
.tk-sep { width: 1px; height: 20px; background: #556; }
.tk-sep.s1 { margin-left: 22px; }
.tk-sep.s2 { margin-left: 14px; }
.tk-name { margin-left: 12px; font-size: 12px; color: #eee; }
.tk-apps { display: flex; margin-left: 12.4px; height: 100%; }
.app { width: 49.3px; height: 100%; display: flex; align-items: center; justify-content: center; position: relative; }
.app svg { width: 24px; height: 24px; }
.app.cur { background: #3c4d5a; border-bottom: 3px solid #76d8e0; }
.app.on::after { content: ""; position: absolute; left: 4px; right: 4px; bottom: 0; height: 3px; background: #76d8e0; }
.a-badge { position: absolute; left: 29px; top: 20px; font-size: 8px; font-weight: 400; color: #fff; }
.tray { margin-left: auto; display: flex; align-items: center; height: 100%; }
.t-car { width: 12px; height: 7px; margin-right: 12.5px; }
.t-wifi { width: 13px; height: 13px; margin-right: 11px; }
.t-bt { width: 11px; height: 20px; border-radius: 5px; background: #1580e0; display: flex; align-items: center; justify-content: center; margin-right: 10.5px; }
.t-bt svg { width: 7px; height: 11px; }
.t-bat { width: 16px; height: 10px; margin-right: 10px; }
.t-eng { width: 31px; font-size: 11.5px; }
.t-clock { width: 66px; display: flex; flex-direction: column; align-items: center; font-size: 12.5px; line-height: 19px; white-space: nowrap; }
.t-note { width: 16px; height: 16px; margin: 0 26px 0 14px; }
```
